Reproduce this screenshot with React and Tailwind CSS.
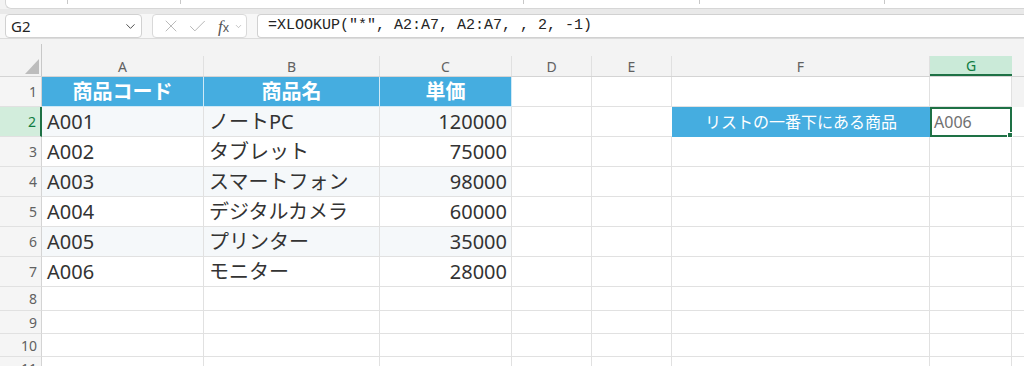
import React from 'react';
import { ChevronDown, X, Check } from 'lucide-react';

const columns = [
  { key: 'A', w: 'w-[162px]' },
  { key: 'B', w: 'w-[176px]' },
  { key: 'C', w: 'w-[132px]' },
  { key: 'D', w: 'w-[80px]' },
  { key: 'E', w: 'w-[80px]' },
  { key: 'F', w: 'w-[258px]' },
  { key: 'G', w: 'w-[82px]' },
];

const products = [
  { code: 'A001', name: 'ノートPC', price: '120000' },
  { code: 'A002', name: 'タブレット', price: '75000' },
  { code: 'A003', name: 'スマートフォン', price: '98000' },
  { code: 'A004', name: 'デジタルカメラ', price: '60000' },
  { code: 'A005', name: 'プリンター', price: '35000' },
  { code: 'A006', name: 'モニター', price: '28000' },
];

const jp = "font-['Noto_Sans','Noto_Sans_CJK_JP',sans-serif]";

const RowHeader = ({ n, active, h }) => (
  <div
    className={`w-[42px] shrink-0 ${h} flex items-center justify-end pr-[4px] text-[14px] border-b border-[#e1e1e1] ${
      active
        ? 'bg-[#d2eddc] text-[#107c41] border-r-2 border-r-[#1e7145]'
        : 'bg-[#f5f5f5] text-[#616161] border-r border-r-[#d4d4d4]'
    }`}
  >
    {n}
  </div>
);

const EmptyCells = ({ from, h }) =>
  columns.slice(from).map((c) => (
    <div key={c.key} className={`${c.w} ${h} shrink-0 bg-white border-r border-b border-[#e1e1e1]`} />
  ));

const App = () => {
  return (
    <div className={`w-[1024px] h-[366px] overflow-hidden bg-[#f3f3f3] ${jp}`}>
      {/* ribbon remnant */}
      <div className="h-[9px] ml-[5px] bg-white rounded-bl-[6px] border-l border-b border-[#d6d6d6] flex items-start">
        <div className="w-[62px] h-[4px] border-r border-[#c8c8c8]" />
        <div className="w-[113px] h-[4px] border-r border-[#c8c8c8]" />
        <div className="w-[343px] h-[4px] border-r border-[#c8c8c8]" />
        <div className="w-[176px] h-[4px] border-r border-[#c8c8c8]" />
        <div className="w-[185px] h-[4px] border-r border-[#c8c8c8]" />
      </div>
      <div className="h-[5px] bg-[#e9e9e9]" />

      {/* formula bar */}
      <div className="h-[25px] flex items-stretch bg-[#f7f7f7] border-b border-[#dcdcdc]">
        <div className="ml-[5px] w-[137px] bg-white border border-[#d1d1d1] rounded-[4px] flex items-center justify-between pl-[5px] pr-[3px] text-[15px] text-[#242424]">
          <span>G2</span>
          <ChevronDown className="w-[15px] h-[15px] text-[#424242]" strokeWidth={1.5} />
        </div>
        <div className="ml-[10px] w-[95px] bg-white border border-[#d9d9d9] rounded-[4px] flex items-center pl-[8px] text-[#b4b4b4]">
          <X className="w-[20px] h-[20px]" strokeWidth={1.1} />
          <Check className="w-[21px] h-[21px] ml-[6px]" strokeWidth={1.1} />
          <span className="ml-[10px] text-[17px] italic text-[#555] font-['Liberation_Serif',serif] leading-none">
            f<span className="text-[12px] not-italic font-['Noto_Sans',sans-serif]">x</span>
          </span>
          <ChevronDown className="w-[9px] h-[9px] ml-[5px] text-[#999]" strokeWidth={1.5} />
        </div>
        <div className="ml-[10px] flex-1 bg-white border border-r-0 border-[#d1d1d1] rounded-l-[4px] flex items-center pl-[10px] text-[15px] text-[#242424] font-['Liberation_Mono',monospace]">
          =XLOOKUP("*", A2:A7, A2:A7, , 2, -1)
        </div>
      </div>
      <div className="h-[5px]" />

      {/* column headers */}
      <div className="flex h-[33px] border-b border-[#d4d4d4]">
        <div className="w-[42px] shrink-0 border-r border-[#c8c8c8] flex items-end justify-end pr-[2px] pb-[2px]">
          <svg width="14" height="15" viewBox="0 0 14 15">
            <polygon points="14,0 14,15 0,15" fill="#bdbdbd" />
          </svg>
        </div>
        <div className="flex flex-col flex-1">
          <div className="h-[13px]" />
          <div className="flex h-[20px]">
            {columns.map((c) => (
              <div
                key={c.key}
                className={`${c.w} shrink-0 flex items-center justify-center text-[14px] ${
                  c.key === 'G'
                    ? 'bg-[#caead8] text-[#107c41] border-b-2 border-[#1e7145]'
                    : 'text-[#616161] border-r border-[#e0e0e0]'
                }`}
              >
                {c.key}
              </div>
            ))}
            <div className="flex-1" />
          </div>
        </div>
      </div>

      {/* row 1 */}
      <div className="flex">
        <RowHeader n={1} h="h-[30px]" />
        {['商品コード', '商品名', '単価'].map((t, i) => (
          <div
            key={t}
            className={`${columns[i].w} h-[30px] shrink-0 bg-[#45ade0] border-r border-b border-[#cfe9f6] flex items-center justify-center text-white text-[20px] font-bold`}
          >
            {t}
          </div>
        ))}
        <EmptyCells from={3} h="h-[30px]" />
      </div>

      {/* data rows */}
      {products.map((p, i) => {
        const tint = i % 2 === 0 ? 'bg-[#f5f8fa]' : 'bg-white';
        return (
          <div key={p.code} className="flex">
            <RowHeader n={i + 2} active={i === 0} h="h-[30px]" />
            <div className={`w-[162px] h-[30px] shrink-0 ${tint} border-r border-b border-[#e1e1e1] flex items-center pl-[5px] text-[20px] text-[#333]`}>
              {p.code}
            </div>
            <div className={`w-[176px] h-[30px] shrink-0 ${tint} border-r border-b border-[#e1e1e1] flex items-center pl-[5px] text-[20px] text-[#333]`}>
              {p.name}
            </div>
            <div className={`w-[132px] h-[30px] shrink-0 ${tint} border-r border-b border-[#e1e1e1] flex items-center justify-end pr-[4px] text-[20px] text-[#333]`}>
              {p.price}
            </div>
            {i === 0 ? (
              <>
                <div className="w-[80px] h-[30px] shrink-0 bg-white border-r border-b border-[#e1e1e1]" />
                <div className="w-[80px] h-[30px] shrink-0 bg-white border-b border-[#e1e1e1]" />
                <div className="w-[258px] h-[30px] shrink-0 bg-[#45ade0] flex items-center justify-center text-white text-[16px]">
                  リストの一番下にある商品
                </div>
                <div className="relative w-[82px] h-[30px] shrink-0 bg-white border-2 border-[#1e7145] flex items-center pl-[2px] text-[16px] text-[#707070]">
                  A006
                  <div className="absolute -right-[3px] -bottom-[3px] w-[6px] h-[6px] bg-[#1e7145] border border-white" />
                </div>
                <div className="flex-1 h-[30px] bg-white border-b border-[#e1e1e1]" />
              </>
            ) : (
              <>
                <EmptyCells from={3} h="h-[30px]" />
                <div className="flex-1 h-[30px] bg-white border-b border-[#e1e1e1]" />
              </>
            )}
          </div>
        );
      })}

      {/* empty rows */}
      {[8, 9, 10, 11].map((n, i) => {
        const h = i === 0 ? 'h-[24px]' : 'h-[23px]';
        return (
          <div key={n} className="flex">
            <RowHeader n={n} h={h} />
            <EmptyCells from={0} h={h} />
            <div className={`flex-1 ${h} bg-white border-b border-[#e1e1e1]`} />
          </div>
        );
      })}
    </div>
  );
};

export default App;
